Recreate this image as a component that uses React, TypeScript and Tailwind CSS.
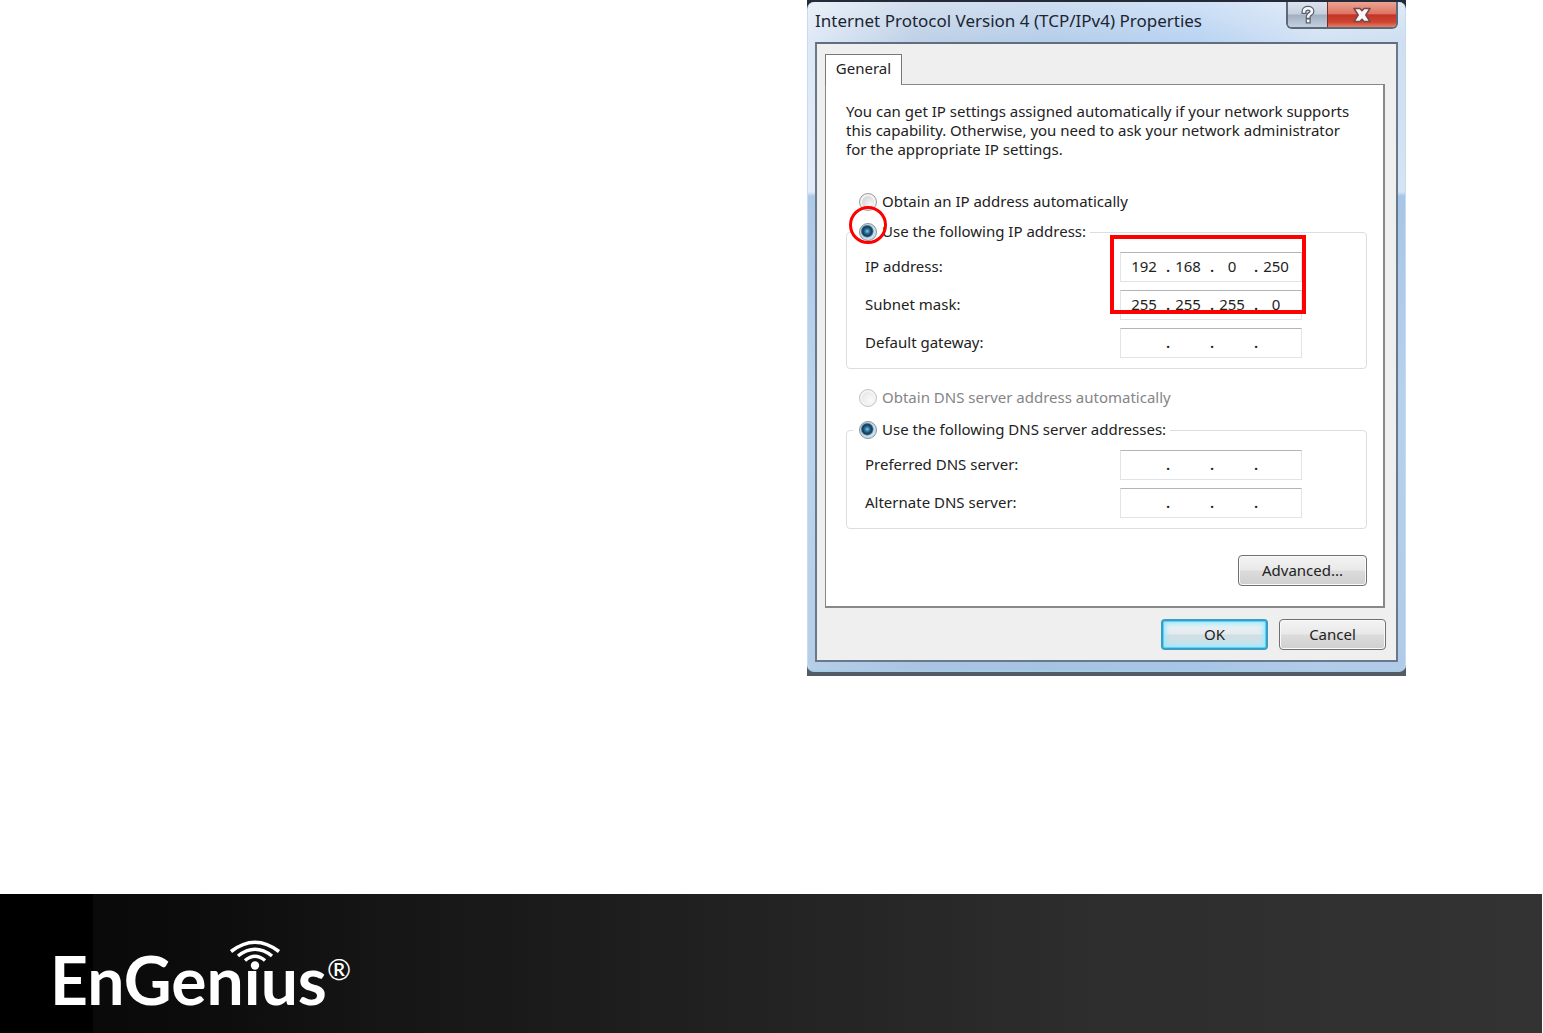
import type { ReactNode } from "react";

const UI_FONT = "font-['Noto_Sans','Open_Sans',sans-serif]";

function Radio({ id, name, checked, disabled }: { id: string; name: string; checked?: boolean; disabled?: boolean }) {
  return (
    <input
      type="radio"
      id={id}
      name={name}
      defaultChecked={checked}
      disabled={disabled}
      className="size-[18px] shrink-0 appearance-none rounded-full border border-[#9b9ea1] bg-[radial-gradient(circle_at_65%_65%,#f8f8f8_0%,#dcdcdc_50%,#c4c6c8_100%)] shadow-[inset_0_0_0_2px_#f4f4f4] checked:border-[#84909a] checked:bg-[radial-gradient(circle_at_45%_45%,#8fd0ee_0%,#3d86b0_14%,#163f5d_34%,#1c4a69_42%,#c4dcec_54%,#e4eef5_100%)] checked:shadow-none disabled:border-[#c4c4c4] disabled:bg-[radial-gradient(circle_at_65%_65%,#fafafa_0%,#e9e9e9_60%,#dedede_100%)]"
    />
  );
}

function IpField({ id, label, octets }: { id: string; label: string; octets: string[] }) {
  return (
    <div className="flex items-center justify-between">
      <label htmlFor={id} className="pb-[2px]">
        {label}
      </label>
      <div className="flex h-[30px] w-[182px] items-center border border-[#e2e3e6] border-t-[#b4b5b8] bg-white pb-[2px] pl-[5px]">
        {octets.map((octet, i) => (
          <div key={i} className="flex items-center">
            {i > 0 && <span className="w-1 text-center leading-5 font-semibold">.</span>}
            <input
              id={i === 0 ? id : `${id}-${i}`}
              aria-label={`${label} ${i + 1}`}
              defaultValue={octet}
              className={i < 3 ? "mr-1 w-9 bg-transparent text-center outline-none" : "w-9 bg-transparent text-center outline-none"}
            />
          </div>
        ))}
      </div>
    </div>
  );
}

function Group({ radio, label, children }: { radio: ReactNode; label: ReactNode; children: ReactNode }) {
  return (
    <fieldset className="relative min-w-0 rounded-[4px] border border-[#dcdddf] pr-[64px] pb-[10px] pl-[18px]">
      <legend className="-ml-3 flex h-6 items-center gap-[5px] pr-1 pl-[6px]">
        {radio}
        {label}
      </legend>
      <div className="flex flex-col gap-2 pt-2">{children}</div>
    </fieldset>
  );
}

function PushButton({ children, className }: { children: ReactNode; className: string }) {
  return (
    <button type="button" className={`flex h-[31px] items-center justify-center rounded-[4px] pb-[1px] ${className}`}>
      {children}
    </button>
  );
}

const PLAIN_BUTTON =
  "border border-[#707070] bg-[linear-gradient(#f3f3f3_0%,#e9e9e9_48%,#dcdcdc_52%,#cfcfcf_100%)] shadow-[inset_0_0_0_1px_#fafafa]";

function TitleBar() {
  return (
    <header className="flex h-10 items-start justify-between pr-[7px] pl-[7px]">
      <h1 className="pt-[7px] font-['Noto_Sans','Open_Sans',sans-serif] text-[17px] leading-6 text-[#1b2532]">
        Internet Protocol Version 4 (TCP/IPv4) Properties
      </h1>
      <div className="flex h-[27px] overflow-hidden rounded-b-[6px] border-2 border-t-0 border-[#5d6878]">
        <button
          type="button"
          aria-label="Help"
          className="flex w-[39px] items-center justify-center bg-[linear-gradient(#dbe3ee_0%,#c6d0dd_48%,#a2afc0_52%,#c3d0e0_100%)]"
        >
          <svg width="18" height="20" viewBox="0 0 18 20" fill="none" strokeLinecap="square">
            <path d="M5 6.500C5 2.200 13 2.200 13 6.500C13 9.200 9.200 8.800 9.200 11.500M9.200 15.800V16" stroke="#59606c" strokeWidth="5" />
            <path d="M5 6.500C5 2.200 13 2.200 13 6.500C13 9.200 9.200 8.800 9.200 11.500M9.200 15.800V16" stroke="#f7f9fb" strokeWidth="2.600" />
          </svg>
        </button>
        <button
          type="button"
          aria-label="Close"
          className="flex w-[69px] items-center justify-center border-l border-[#7c2a26] bg-[linear-gradient(#eba493_0%,#dd7565_46%,#c53325_52%,#cd4532_80%,#e57e64_100%)]"
        >
          <svg width="20" height="18" viewBox="0 0 20 18" fill="none">
            <path d="M2 2.500H8L10 4.800L12 2.500H18L13.800 9L18 15.500H12L10 13.200L8 15.500H2L6.200 9Z" fill="#f8f8f8" stroke="#7a4648" strokeWidth="1.500" strokeLinejoin="round" />
          </svg>
        </button>
      </div>
    </header>
  );
}

function PropertiesDialog() {
  return (
    <section aria-label="Internet Protocol Version 4 (TCP/IPv4) Properties" className="w-[599px] bg-linear-to-b from-[#252a38] to-[#535b66] pt-[2px] pb-1">
      <div className="rounded-[7px] border-x border-b-2 border-[#c3dcf1] border-b-[#a5cce4] bg-[linear-gradient(90deg,#dfe9f6_0%,#bed0e6_18%,#b5cde9_40%,#b8d3f2_65%,#d3e2f4_85%,#cfdff1_100%)]">
        <div className="rounded-[6px] bg-[linear-gradient(#ffffff55_0px,#ffffff00_40px,#ffffff22_190px,#8db4dc99_194px,#a7c8e999_400px,#9dbce099_100%)]">
          <TitleBar />
          <div className="px-[7px] pb-2">
            <div className={`border-2 border-[#68798d] border-t-[#5f6e7e] bg-[#efefef] pt-[10px] pr-[11px] pb-[10px] pl-2 text-[15px] leading-[19px] text-[#222] ${UI_FONT}`}>
              <div role="tablist" className="flex">
                <button
                  type="button"
                  role="tab"
                  aria-selected="true"
                  className="relative z-10 -mb-px flex h-[31px] w-[77px] items-center justify-center border border-b-0 border-[#77797c] bg-white pb-[3px]"
                >
                  General
                </button>
              </div>
              <div role="tabpanel" className="border border-r-2 border-b-2 border-[#86888b] bg-white pt-[17px] pr-4 pb-5 pl-[20px]">
                <p>
                  You can get IP settings assigned automatically if your network supports
                  <br />
                  this capability. Otherwise, you need to ask your network administrator
                  <br />
                  for the appropriate IP settings.
                </p>
                <div className="mt-[31px] flex h-6 items-center gap-[5px] pl-[13px]">
                  <Radio id="ip-auto" name="ip" />
                  <label htmlFor="ip-auto" className="pb-[2px]">
                    Obtain an IP address automatically
                  </label>
                </div>
                <div className="mt-[6px]">
                  <Group
                    radio={
                      <span className="relative flex">
                        <Radio id="ip-manual" name="ip" checked />
                        <span className="pointer-events-none absolute -top-[17px] -left-[10px] z-10 size-[38px] rounded-full border-[3px] border-[#ff0000]" />
                      </span>
                    }
                    label={
                      <label htmlFor="ip-manual" className="pb-[2px]">
                        Use the following IP address:
                      </label>
                    }
                  >
                    <IpField id="ip-address" label="IP address:" octets={["192", "168", "0", "250"]} />
                    <IpField id="subnet" label="Subnet mask:" octets={["255", "255", "255", "0"]} />
                    <IpField id="gateway" label="Default gateway:" octets={["", "", "", ""]} />
                    <span className="pointer-events-none absolute -top-[9px] right-[60px] h-[79px] w-[196px] border-4 border-[#ff0000]" />
                  </Group>
                </div>
                <div className="mt-[17px] flex h-6 items-center gap-[5px] pl-[13px] text-[#858585]">
                  <Radio id="dns-auto" name="dns" disabled />
                  <label htmlFor="dns-auto" className="pb-[2px]">
                    Obtain DNS server address automatically
                  </label>
                </div>
                <div className="mt-2">
                  <Group
                    radio={<Radio id="dns-manual" name="dns" checked />}
                    label={
                      <label htmlFor="dns-manual" className="pb-[2px]">
                        Use the following DNS server addresses:
                      </label>
                    }
                  >
                    <IpField id="dns-preferred" label="Preferred DNS server:" octets={["", "", "", ""]} />
                    <IpField id="dns-alternate" label="Alternate DNS server:" octets={["", "", "", ""]} />
                  </Group>
                </div>
                <div className="mt-[26px] flex justify-end">
                  <PushButton className={`w-[129px] ${PLAIN_BUTTON}`}>Advanced...</PushButton>
                </div>
              </div>
              <div className="-mr-px mt-[11px] flex justify-end gap-[11px]">
                <PushButton className="w-[107px] border-2 border-[#3c9cc4] bg-[linear-gradient(#eef4f6_0%,#e3ebee_48%,#d2dee3_52%,#c9e4ee_100%)] shadow-[inset_0_0_0_1px_#58d3f7,inset_0_0_4px_3px_#9be9fd]">
                  OK
                </PushButton>
                <PushButton className={`w-[107px] ${PLAIN_BUTTON}`}>Cancel</PushButton>
              </div>
            </div>
          </div>
        </div>
      </div>
    </section>
  );
}

function Logo() {
  return (
    <div aria-label="EnGenius" className="relative flex items-start font-['Lato',sans-serif] text-white">
      <span className="text-[66px] leading-[64px] font-bold">EnGenıus</span>
      <span className="pt-[5px] text-[29px] leading-8">®</span>
      <svg className="absolute -top-[8px] left-[178px]" width="54" height="34" viewBox="0 0 54 34" fill="none" stroke="white" strokeWidth="3.500">
        <path d="M3 11.500Q27 -7 51 11.500" />
        <path d="M10 16Q27 2.500 44 16" />
        <path d="M17 20.500Q27 12 37 20.500" />
        <circle cx="27" cy="25.500" r="4.200" fill="white" stroke="none" />
      </svg>
    </div>
  );
}

export default function App() {
  return (
    <div className="flex min-h-screen flex-col bg-white">
      <main className="flex flex-1 justify-end pr-[137px] pb-8">
        <div>
          <PropertiesDialog />
        </div>
      </main>
      <footer className="mr-px flex h-[139px] bg-[linear-gradient(90deg,#000_0%,#000_6%,#0a0a0a_6%,#0c0c0c_13%,#151515_24%,#202020_45%,#2d2d2d_70%,#333_100%)] pt-[54px] pl-[50px]">
        <Logo />
      </footer>
    </div>
  );
}
